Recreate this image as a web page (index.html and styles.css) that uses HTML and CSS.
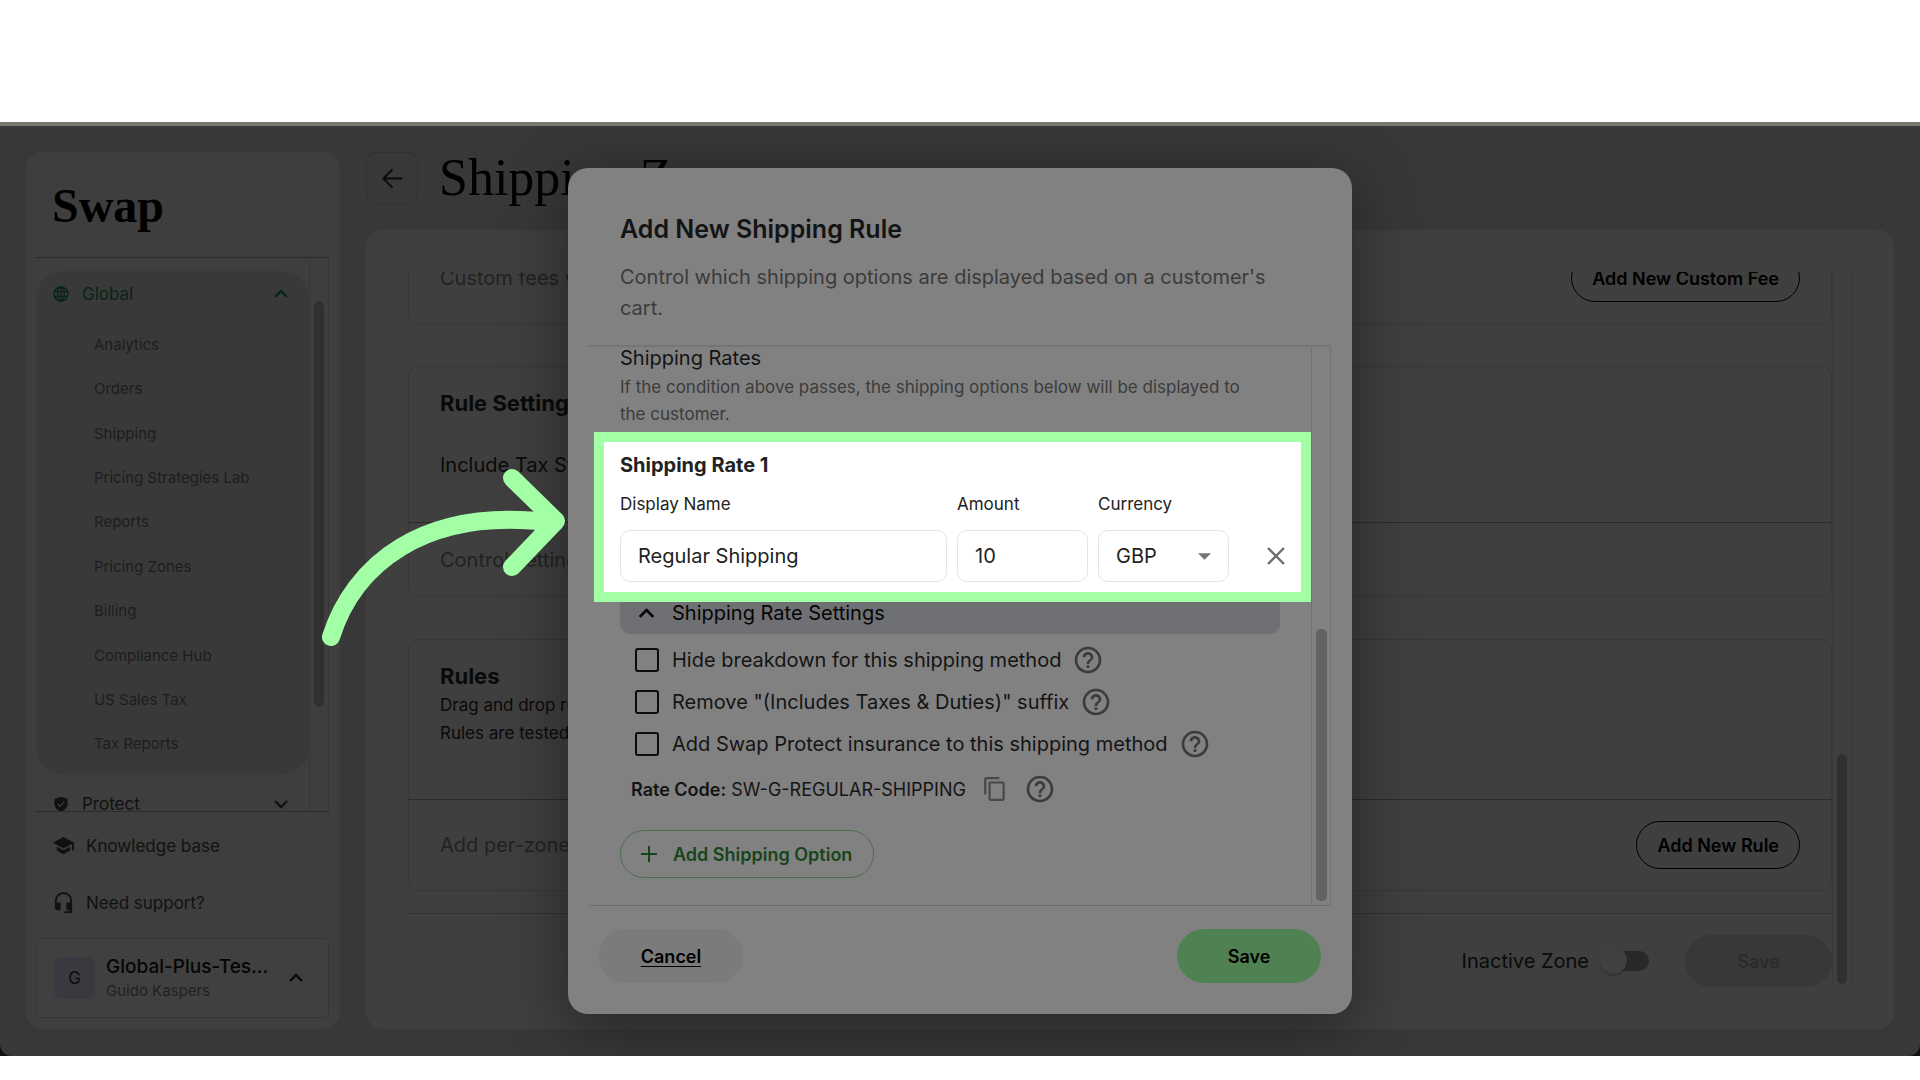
FILE: index.html
```
<!DOCTYPE html>
<html lang="en">
<head>
    <meta charset="UTF-8">
    <meta name="viewport" content="width=device-width, initial-scale=1.0">
    <title>Swap - Shipping Zone</title>
    <link rel="stylesheet" href="styles.css">
</head>
<body>
    <svg class="sprite" aria-hidden="true">
        <symbol id="up" viewBox="0 0 24 24"><path d="M6 15l6-6 6 6" fill="none" stroke="currentColor" stroke-width="2.4"/></symbol>
        <symbol id="down" viewBox="0 0 24 24"><path d="M6 9l6 6 6-6" fill="none" stroke="currentColor" stroke-width="2.4"/></symbol>
        <symbol id="help" viewBox="0 0 24 24"><path fill="currentColor" d="M11 18h2v-2h-2v2zm1-16C6.48 2 2 6.48 2 12s4.48 10 10 10 10-4.48 10-10S17.52 2 12 2zm0 18c-4.41 0-8-3.59-8-8s3.59-8 8-8 8 3.59 8 8-3.59 8-8 8zm0-14c-2.21 0-4 1.79-4 4h2c0-1.1.9-2 2-2s2 .9 2 2c0 2-3 1.75-3 5h2c0-2.25 3-2.5 3-5 0-2.21-1.79-4-4-4z"/></symbol>
    </svg>

    <div class="frame">
        <div class="app">
            <aside class="sidebar">
                <div class="logo">Swap</div>
                <div class="nav-scroll">
                    <nav class="nav">
                        <div class="nav-group">
                            <button class="nav-head active" type="button">
                                <svg class="icon-nav" viewBox="0 0 24 24" fill="none" stroke="currentColor" stroke-width="2"><circle cx="12" cy="12" r="10.5"/><ellipse cx="12" cy="12" rx="5" ry="10.5"/><path d="M12 1.5v21M2 8.5h20M2 15.5h20"/></svg>
                                <span>Global</span>
                                <svg class="icon-chevron"><use href="#up"/></svg>
                            </button>
                            <ul class="nav-list">
                                <li><a href="#">Analytics</a></li>
                                <li><a href="#">Orders</a></li>
                                <li><a href="#">Shipping</a></li>
                                <li><a href="#">Pricing Strategies Lab</a></li>
                                <li><a href="#">Reports</a></li>
                                <li><a href="#">Pricing Zones</a></li>
                                <li><a href="#">Billing</a></li>
                                <li><a href="#">Compliance Hub</a></li>
                                <li><a href="#">US Sales Tax</a></li>
                                <li><a href="#">Tax Reports</a></li>
                            </ul>
                        </div>
                        <button class="nav-head" type="button">
                            <svg class="icon-nav" viewBox="0 0 24 24"><path fill="currentColor" d="M12 1L2 4.5V11c0 6 4 10.5 10 12.5C18 21.5 22 17 22 11V4.5z"/><path d="M7 12l3.5 3.5L17 8.5" fill="none" stroke="#3e3e3e" stroke-width="2"/></svg>
                            <span>Protect</span>
                            <svg class="icon-chevron"><use href="#down"/></svg>
                        </button>
                    </nav>
                    <div class="track"><div class="thumb thumb-nav"></div></div>
                </div>
                <div class="side-links">
                    <a href="#">
                        <svg class="icon-side" viewBox="0 0 24 24"><path fill="currentColor" d="M5 13.18v4L12 21l7-3.82v-4L12 17l-7-3.82zM12 3L1 9l11 6 9-4.91V17h2V9L12 3z"/></svg>
                        Knowledge base
                    </a>
                    <a href="#">
                        <svg class="icon-side" viewBox="0 0 24 24"><path fill="currentColor" d="M12 1a9 9 0 0 0-9 9v7a3 3 0 0 0 3 3h3v-8H5v-2a7 7 0 0 1 14 0v2h-4v8h4v1h-6v2h8V10a9 9 0 0 0-9-9z"/></svg>
                        Need support?
                    </a>
                </div>
                <button class="account" type="button">
                    <span class="avatar">G</span>
                    <span class="account-text">
                        <span class="account-name">Global-Plus-Tes...</span>
                        <span class="account-user">Guido Kaspers</span>
                    </span>
                    <svg class="icon-chevron"><use href="#up"/></svg>
                </button>
            </aside>

            <main class="main">
                <header class="page-head">
                    <button class="back" type="button" aria-label="Back">
                        <svg viewBox="0 0 24 24" fill="none" stroke="currentColor" stroke-width="2"><path d="M22 12H3M12 2.5L2.5 12l9.5 9.5"/></svg>
                    </button>
                    <h1>Shipping Zone</h1>
                </header>
                <div class="panel">
                    <div class="zone">
                        <section class="card">
                            <div class="card-row">
                                <p class="muted">Custom fees will be added</p>
                                <button class="btn-outline" type="button">Add New Custom Fee</button>
                            </div>
                        </section>
                        <section class="card">
                            <div class="card-head">
                                <h2>Rule Settings</h2>
                                <p class="setting">Include Tax Status</p>
                            </div>
                            <div class="card-row card-row-short">
                                <p class="muted">Control settings</p>
                            </div>
                        </section>
                        <section class="card">
                            <div class="card-head card-head-rules">
                                <h2>Rules</h2>
                                <p>Drag and drop rules</p>
                                <p>Rules are tested</p>
                            </div>
                            <div class="card-row">
                                <p class="muted">Add per-zone rules</p>
                                <button class="btn-outline" type="button">Add New Rule</button>
                            </div>
                        </section>
                        <footer class="zone-foot">
                            <label class="switch">Inactive Zone <input type="checkbox" role="switch"></label>
                            <button class="btn-save-zone" type="button" disabled>Save</button>
                        </footer>
                    </div>
                    <div class="track track-zone"><div class="thumb thumb-zone"></div></div>
                </div>
            </main>

            <div class="overlay">
                <div class="modal" role="dialog" aria-labelledby="modal-title">
                    <header class="modal-head">
                        <h2 id="modal-title">Add New Shipping Rule</h2>
                        <p>Control which shipping options are displayed based on a customer's cart.</p>
                    </header>
                    <div class="modal-body">
                        <form class="modal-content">
                            <h3>Shipping Rates</h3>
                            <p class="hint">If the condition above passes, the shipping options below will be displayed to the customer.</p>

                            <section class="rate">
                                <h4>Shipping Rate 1</h4>
                                <div class="fields">
                                    <div class="field field-name">
                                        <label for="name">Display Name</label>
                                        <input id="name" type="text" value="Regular Shipping">
                                    </div>
                                    <div class="field">
                                        <label for="amount">Amount</label>
                                        <input id="amount" type="text" value="10">
                                    </div>
                                    <div class="field">
                                        <label for="currency">Currency</label>
                                        <div class="select">
                                            <select id="currency"><option>GBP</option></select>
                                            <svg viewBox="0 0 12 6"><path d="M0 0h12L6 6z" fill="currentColor"/></svg>
                                        </div>
                                    </div>
                                    <button class="remove" type="button" aria-label="Remove rate">
                                        <svg viewBox="0 0 18 18"><path d="M1 1l16 16M17 1L1 17" stroke="currentColor" stroke-width="2.4"/></svg>
                                    </button>
                                </div>
                            </section>

                            <button class="rate-settings" type="button">
                                <svg><use href="#up"/></svg>
                                Shipping Rate Settings
                            </button>
                            <div class="checks">
                                <div class="check"><label><input type="checkbox"> Hide breakdown for this shipping method</label><svg class="icon-help"><use href="#help"/></svg></div>
                                <div class="check"><label><input type="checkbox"> Remove "(Includes Taxes &amp; Duties)" suffix</label><svg class="icon-help"><use href="#help"/></svg></div>
                                <div class="check"><label><input type="checkbox"> Add Swap Protect insurance to this shipping method</label><svg class="icon-help"><use href="#help"/></svg></div>
                            </div>
                            <div class="rate-code">
                                <span><b>Rate Code:</b> SW-G-REGULAR-SHIPPING</span>
                                <button class="copy" type="button" aria-label="Copy rate code">
                                    <svg viewBox="0 0 24 24"><path fill="currentColor" d="M16 1H4c-1.1 0-2 .9-2 2v14h2V3h12V1zm3 4H8c-1.1 0-2 .9-2 2v14c0 1.1.9 2 2 2h11c1.1 0 2-.9 2-2V7c0-1.1-.9-2-2-2zm0 16H8V7h11v14z"/></svg>
                                </button>
                                <svg class="icon-help"><use href="#help"/></svg>
                            </div>
                            <button class="add-option" type="button">
                                <svg viewBox="0 0 16 16"><path d="M8 0v16M0 8h16" stroke="currentColor" stroke-width="2"/></svg>
                                Add Shipping Option
                            </button>
                        </form>
                        <div class="track"><div class="thumb thumb-modal"></div></div>
                    </div>
                    <footer class="modal-foot">
                        <button class="btn-cancel" type="button">Cancel</button>
                        <button class="btn-save" type="button">Save</button>
                    </footer>
                </div>
                <svg class="pointer" viewBox="0 0 244 182" fill="none" stroke="#a3ffa6" stroke-width="18" stroke-linecap="round" stroke-linejoin="round">
                    <path d="M9 168C31 98 100 36 232 54"/>
                    <path d="M190 9L234 52L190 98"/>
                </svg>
            </div>
        </div>
    </div>
</body>
</html>
```
FILE: styles.css
```
* {
    box-sizing: border-box;
}
body {
    margin: 0;
    height: 100vh;
    padding: 122px 0 24px;
    background: #fff;
    color: #0a0a0a;
    font-family: Inter, "Liberation Sans", sans-serif;
    font-size: 20px;
}
h1, h2, h3, h4, p, ul {
    margin: 0;
    padding: 0;
    font-weight: 400;
}
button, input, select {
    font: inherit;
    color: inherit;
    border: 0;
    background: none;
    padding: 0;
    margin: 0;
}
a {
    color: inherit;
    text-decoration: none;
}
svg {
    flex: none;
}
.sprite {
    display: none;
}

/* window */
.frame {
    height: 100%;
    border-top: 4px solid #77786f;
    background: #10110c;
}
.app {
    position: relative;
    height: 100%;
    padding: 26px 26px 27px;
    display: flex;
    gap: 26px;
    background: #383838;
    border-radius: 0 0 12px 12px;
    overflow: hidden;
}

/* sidebar */
.sidebar {
    width: 314px;
    flex: none;
    display: flex;
    flex-direction: column;
    padding: 0 11px 11px 10px;
    background: #3e3e3e;
    border-radius: 16px;
}
.logo {
    height: 105px;
    flex: none;
    padding: 16px 16px 0;
    font-family: "Liberation Serif", serif;
    font-weight: 700;
    font-size: 48px;
    line-height: 76px;
    color: #000;
}
.nav-scroll {
    flex: 1;
    min-height: 0;
    display: flex;
    border-top: 1px solid #2b2b2b;
    border-bottom: 1px solid #2b2b2b;
    overflow: hidden;
}
.nav {
    flex: 1;
    padding-top: 13px;
}
.nav-group {
    padding-bottom: 9px;
    margin-bottom: 6px;
    background: #393939;
    border-radius: 28px;
}
.nav-head {
    width: 100%;
    height: 46px;
    padding: 0 16px 0 17px;
    display: flex;
    align-items: center;
    gap: 13px;
    font-size: 17px;
    text-align: left;
    color: #111;
}
.nav-head span {
    flex: 1;
}
.active {
    color: #06241a;
}
.icon-nav {
    width: 16px;
    height: 16px;
}
.icon-chevron {
    width: 24px;
    height: 24px;
}
.nav-list {
    height: 449px;
    padding: 5px 0 0 58px;
    display: flex;
    flex-direction: column;
    list-style: none;
    font-size: 15px;
    color: #1d1d1d;
}
.nav-list li {
    flex: 1;
    display: flex;
    align-items: center;
}
.track {
    width: 20px;
    flex: none;
    position: relative;
    border: solid rgba(0, 0, 0, 0.1);
    border-width: 0 1px;
}
.thumb {
    position: absolute;
    left: 4px;
    width: 10px;
    border-radius: 5px;
    background: #303030;
}
.thumb-nav {
    top: 43px;
    height: 406px;
}
.side-links {
    padding: 5px 0 7px;
    font-size: 17px;
    color: #111;
}
.side-links a {
    height: 57px;
    padding-left: 16px;
    display: flex;
    align-items: center;
    gap: 11px;
}
.icon-side {
    width: 23px;
    height: 23px;
}
.account {
    height: 80px;
    flex: none;
    padding: 0 20px 0 17px;
    display: flex;
    align-items: center;
    gap: 11px;
    border: 1px solid #363636;
    border-radius: 5px;
    background: #404040;
    text-align: left;
}
.avatar {
    width: 41px;
    height: 42px;
    border-radius: 8px;
    background: #39393f;
    font-size: 17px;
    line-height: 42px;
    text-align: center;
}
.account-text {
    flex: 1;
    display: grid;
    color: #222;
}
.account-name {
    font-size: 19px;
    font-weight: 500;
    line-height: 26px;
    color: #050505;
}
.account-user {
    font-size: 15px;
    line-height: 22px;
}

/* page */
.main {
    flex: 1;
    min-width: 0;
    display: flex;
    flex-direction: column;
    gap: 26px;
}
.page-head {
    height: 52px;
    flex: none;
    display: flex;
    align-items: center;
    gap: 21px;
}
.back {
    width: 52px;
    height: 52px;
    display: grid;
    place-items: center;
    border: 1px solid #313131;
    border-radius: 10px;
}
.back svg {
    width: 23px;
    height: 23px;
}
.page-head h1 {
    font-family: "Liberation Serif", serif;
    font-size: 52px;
    line-height: 52px;
    color: #000;
}
.panel {
    flex: 1;
    min-height: 0;
    padding: 42px;
    display: flex;
    background: #3f3f3f;
    border-radius: 16px;
}
.zone {
    flex: 1;
    display: flex;
    flex-direction: column;
    justify-content: flex-end;
    overflow: hidden;
}
.card {
    flex: none;
    margin-bottom: 42px;
    border: 1px solid #373737;
    border-radius: 10px;
}
.card:nth-child(3) {
    margin-bottom: 22px;
}
.card h2 {
    font-size: 22px;
    font-weight: 700;
    line-height: 30px;
}
.card-head {
    padding: 21px 31px 42px;
    border-bottom: 1px solid #2b2b2b;
}
.card-head-rules {
    padding-bottom: 52px;
    font-size: 17px;
    line-height: 28px;
}
.setting {
    margin-top: 32px;
    line-height: 30px;
}
.card-row {
    height: 90px;
    padding: 0 31px;
    display: flex;
    align-items: center;
    justify-content: space-between;
}
.card-row-short {
    height: 73px;
}
.muted {
    color: #222;
}
.btn-outline {
    height: 48px;
    padding: 0 20px;
    border: 1px solid #000;
    border-radius: 24px;
    font-size: 18px;
    font-weight: 600;
    color: #000;
}
.zone-foot {
    flex: none;
    padding-top: 21px;
    display: flex;
    justify-content: flex-end;
    align-items: center;
    gap: 36px;
    border-top: 1px solid #303030;
}
.switch {
    display: flex;
    align-items: center;
    gap: 14px;
}
.switch input {
    appearance: none;
    width: 46px;
    height: 20px;
    border-radius: 10px;
    background: #292929;
    position: relative;
}
.switch input::before {
    content: "";
    position: absolute;
    left: -3px;
    top: -4px;
    width: 27px;
    height: 27px;
    border-radius: 50%;
    background: #404040;
    box-shadow: 0 2px 2px rgba(0, 0, 0, 0.2);
}
.btn-save-zone {
    width: 147px;
    height: 52px;
    border-radius: 26px;
    background: #383838;
    font-size: 18px;
    font-weight: 600;
    color: #2b2b2b;
}
.track-zone {
    border-color: #393939;
}
.thumb-zone {
    bottom: 3px;
    height: 230px;
}

/* dialog */
.overlay {
    position: absolute;
    inset: 0;
    padding: 42px 0;
    display: flex;
    justify-content: center;
}
.modal {
    width: 784px;
    display: flex;
    flex-direction: column;
    background: #818181;
    border-radius: 20px;
    box-shadow: 0 12px 60px 6px rgba(0, 0, 0, 0.35);
    color: #141414;
}
.modal-head {
    padding: 43px 52px 21px;
    color: #3b3b3b;
    line-height: 31px;
}
.modal-head h2 {
    margin-bottom: 15px;
    font-size: 25px;
    font-weight: 600;
    line-height: 36px;
    color: #141414;
}
.modal-body {
    flex: 1;
    min-height: 0;
    margin: 0 21px;
    display: flex;
    border-top: 2px solid #757575;
    border-bottom: 1px solid #6c6c6c;
    overflow: hidden;
}
.modal-content {
    flex: 1;
    padding: 0 31px 27px;
    display: flex;
    flex-direction: column;
    justify-content: flex-end;
    align-items: flex-start;
}
.modal-content > * {
    flex: none;
}
.modal-content h3 {
    font-size: 20px;
    line-height: 28px;
    margin-bottom: 2px;
}
.hint {
    padding-right: 20px;
    font-size: 17px;
    line-height: 27px;
    color: #3b3b3b;
    margin-bottom: 4px;
}
.rate {
    position: relative;
    z-index: 1;
    align-self: stretch;
    margin: 0 -31px 0 -26px;
    padding: 9px 4px 10px 16px;
    border: 10px solid #a3ffa6;
    background: #fff;
    color: #222;
}
.rate h4 {
    font-size: 20px;
    font-weight: 700;
    line-height: 28px;
    margin-bottom: 12px;
}
.fields {
    display: flex;
    align-items: flex-end;
    gap: 10px;
}
.field {
    width: 131px;
}
.field-name {
    width: auto;
    flex: 1;
}
.field label {
    display: block;
    font-size: 17px;
    line-height: 26px;
    margin-bottom: 13px;
}
.field input, .field select {
    width: 100%;
    height: 52px;
    padding: 0 17px;
    border: 1px solid #e3e3e8;
    border-radius: 10px;
    display: block;
    appearance: none;
}
.select {
    position: relative;
}
.select svg {
    position: absolute;
    right: 18px;
    top: 23px;
    width: 13px;
    height: 7px;
    color: #757575;
}
.remove {
    width: 42px;
    height: 52px;
    margin-left: 16px;
    display: grid;
    place-items: center;
    color: #6f6f6f;
}
.remove svg {
    width: 18px;
    height: 18px;
}
.rate-settings {
    align-self: stretch;
    height: 42px;
    margin-top: -10px;
    padding-left: 13px;
    display: flex;
    align-items: center;
    gap: 12px;
    background: #6f7073;
    border-radius: 10px;
    color: #050505;
}
.rate-settings svg {
    width: 27px;
    height: 27px;
}
.checks {
    padding: 5px 0 3px 15px;
}
.check {
    height: 42px;
    display: flex;
    align-items: center;
    gap: 11px;
}
.check label {
    display: flex;
    align-items: center;
    gap: 13px;
}
.check input {
    appearance: none;
    width: 24px;
    height: 24px;
    border: 2px solid #0c0c0c;
    border-radius: 3px;
}
.icon-help {
    width: 32px;
    height: 32px;
    color: #3b3b3b;
}
.rate-code {
    height: 42px;
    margin-bottom: 20px;
    padding-left: 11px;
    display: flex;
    align-items: center;
    gap: 16px;
    font-size: 18px;
}
.rate-code b {
    font-weight: 600;
}
.copy {
    height: 26px;
    color: #484848;
}
.copy svg {
    width: 26px;
    height: 26px;
}
.add-option {
    height: 48px;
    padding: 0 21px 0 20px;
    display: flex;
    align-items: center;
    gap: 16px;
    border: 1px solid #4b704d;
    border-radius: 24px;
    font-size: 18px;
    font-weight: 600;
    color: #17451b;
}
.add-option svg {
    width: 16px;
    height: 16px;
}
.modal .thumb {
    width: 11px;
    background: #626262;
}
.thumb-modal {
    bottom: 4px;
    height: 272px;
}
.modal-foot {
    padding: 23px 31px 31px;
    display: flex;
    justify-content: space-between;
}
.modal-foot button {
    width: 144px;
    height: 54px;
    border-radius: 27px;
    font-size: 18px;
    font-weight: 600;
    color: #000;
}
.modal-foot .btn-cancel {
    background: #7b7b7b;
    text-decoration: underline;
    text-underline-offset: 3px;
}
.modal-foot .btn-save {
    background: #508153;
}

/* arrow that points at the rate fields */
.pointer {
    position: absolute;
    top: 343px;
    right: calc(50% + 394px);
    width: 244px;
    height: 182px;
}
```
